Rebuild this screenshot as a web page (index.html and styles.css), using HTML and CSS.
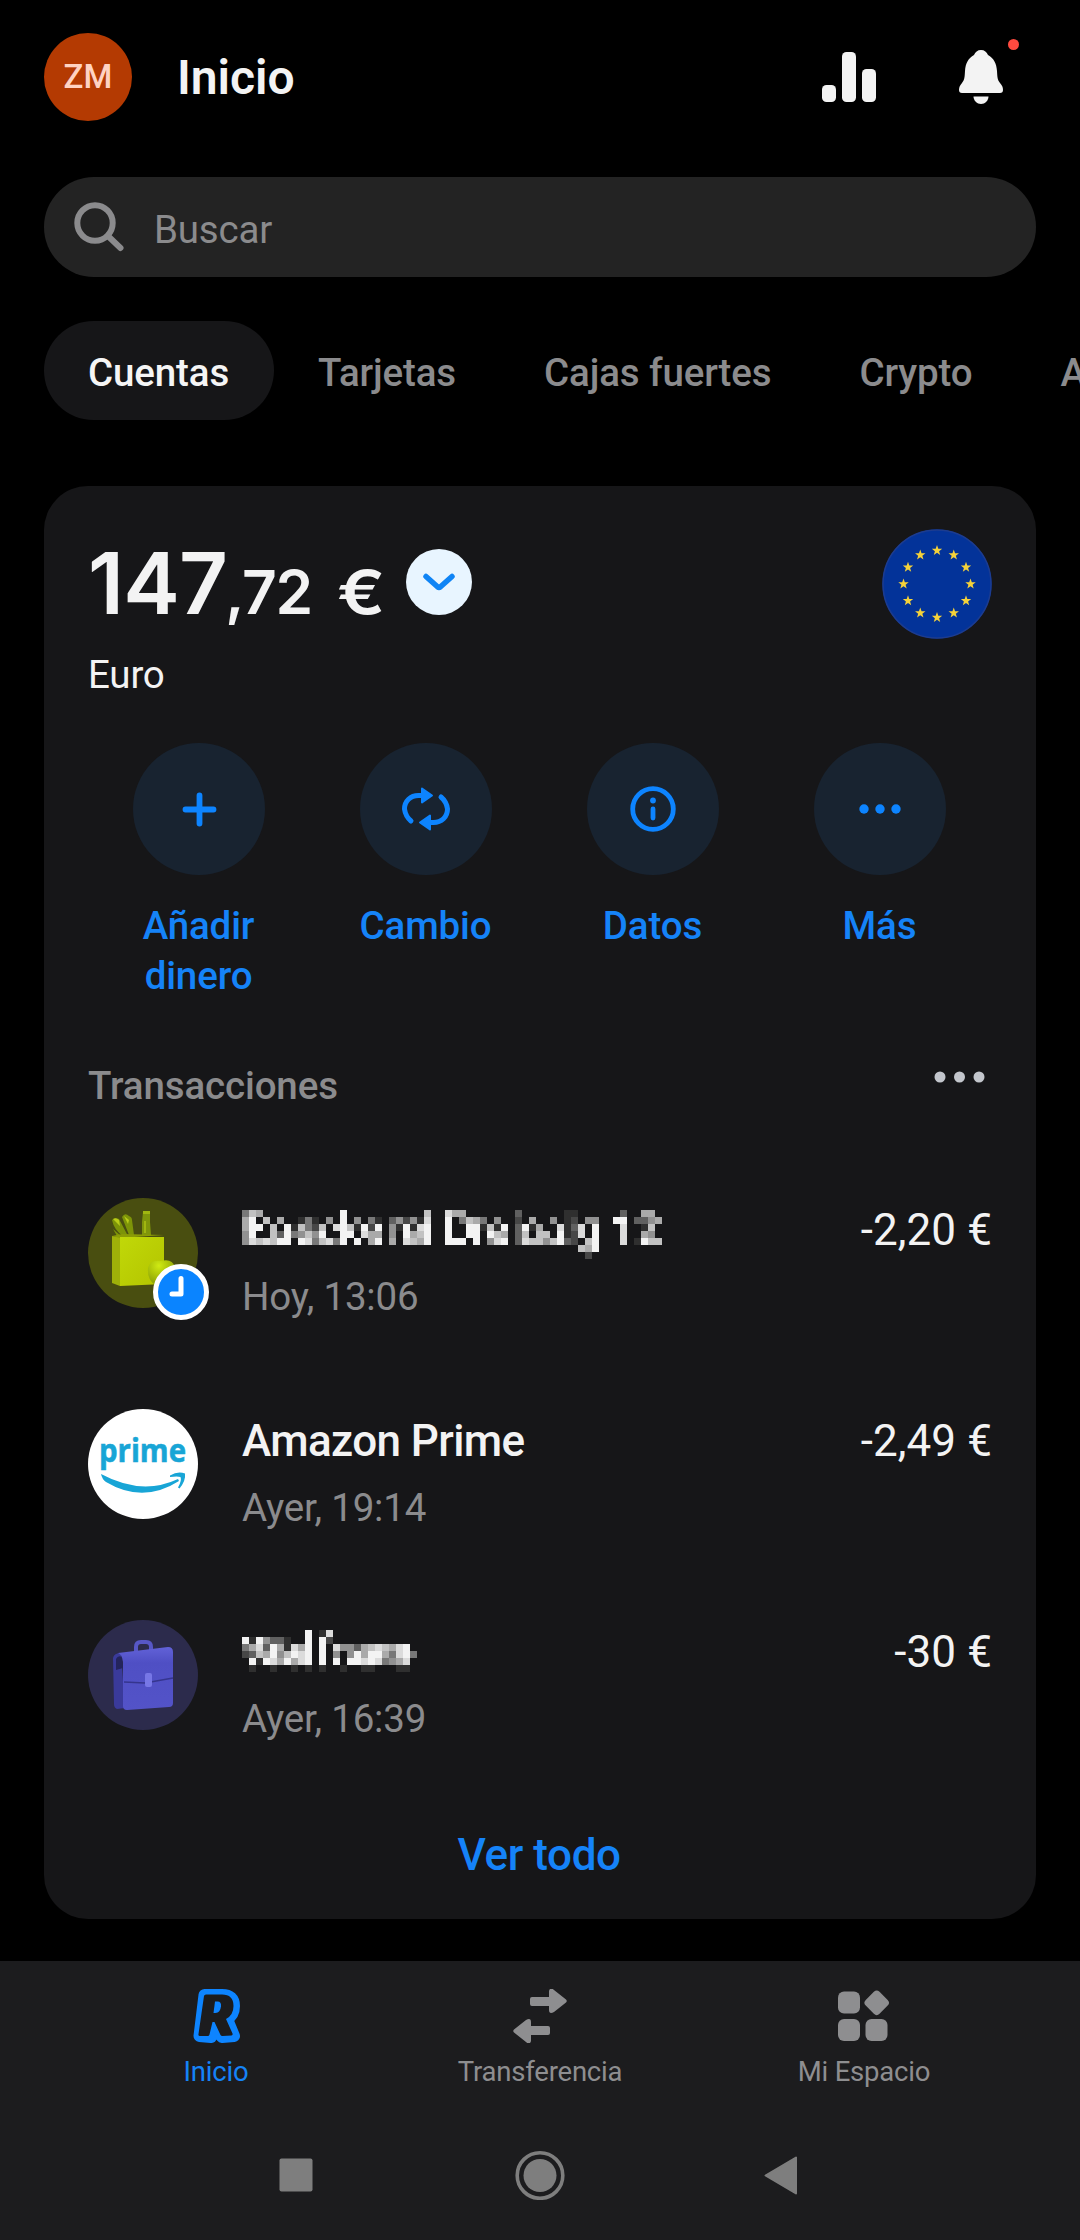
FILE: index.html
```html
<!DOCTYPE html>
<html lang="es">
<head>
<meta charset="utf-8">
<title>Inicio</title>
<link rel="stylesheet" href="styles.css">
</head>
<body>
<div class="app">
  <header class="header">
    <div class="avatar">ZM</div>
    <h1 class="title">Inicio</h1>
    <svg class="icon-stats" width="54" height="50" viewBox="0 0 54 50" fill="#f3f3f3"><rect y="33" width="14" height="17" rx="4.5"/><rect x="20" width="14" height="50" rx="4.5"/><rect x="40" y="17" width="14" height="33" rx="4.5"/></svg>
    <div class="bell">
      <svg width="46" height="55" viewBox="0 0 46 55" fill="#f3f3f3"><path d="M23 0c3.5 0 5.8 2 7 5 5.500 3 8.500 8 9 16 .3 6 .5 9 3 12 2 2.500 3 4 3 7 0 2-1 3-3 3H4c-2 0-3-1-3-3 0-3 1-4.500 3-7 2.500-3 2.700-6 3-12 .5-8 3.500-13 9-16 1.200-3 3.500-5 7-5z"/><path d="M15.500 46.500h15c0 4-3.500 7.500-7.500 7.500s-7.500-3.500-7.500-7.500z"/></svg>
      <span class="bell-dot"></span>
    </div>
  </header>

  <div class="search">
    <svg width="52" height="52" viewBox="0 0 52 52" fill="none" stroke="#8b8b8d" stroke-width="6"><circle cx="21" cy="22" r="17.700"/><path d="M34.500 35.500 46.500 47" stroke-linecap="round"/></svg>
    <span class="search-text">Buscar</span>
  </div>

  <nav class="tabs">
    <span class="tab tab-active">Cuentas</span>
    <span class="tab">Tarjetas</span>
    <span class="tab">Cajas fuertes</span>
    <span class="tab">Crypto</span>
    <span class="tab">Acciones</span>
  </nav>

  <main class="card">
    <section class="balance">
      <div>
        <div class="amount-row">
          <div class="amount">147<span class="cents">,72</span><span class="currency">€</span></div>
          <div class="expand"><svg width="32" height="18" viewBox="0 0 32 18" fill="none" stroke="#0f84f5" stroke-width="5.500" stroke-linecap="round" stroke-linejoin="round"><path d="M3 3.500 14.500 13.800q1.500 1.200 3 0L29 3.500"/></svg></div>
        </div>
        <div class="account-name">Euro</div>
      </div>
      <svg class="flag" width="110" height="110" viewBox="-55 -55 110 110">
        <defs><path id="star" fill="#f5d23a" d="M0-5.500 1.300-1.700H5.200L2.100.7 3.200 4.500 0 2.200-3.200 4.500-2.100.7-5.200-1.700H-1.300z"/></defs>
        <circle r="54.500" fill="#033399"/><circle r="54" fill="none" stroke="#1c3c90" stroke-width="1.500"/>
        <use href="#star" y="-33.500"/><use href="#star" x="16.750" y="-29"/><use href="#star" x="29" y="-16.750"/><use href="#star" x="33.500"/><use href="#star" x="29" y="16.750"/><use href="#star" x="16.750" y="29"/><use href="#star" y="33.500"/><use href="#star" x="-16.750" y="29"/><use href="#star" x="-29" y="16.750"/><use href="#star" x="-33.500"/><use href="#star" x="-29" y="-16.750"/><use href="#star" x="-16.750" y="-29"/>
      </svg>
    </section>

    <section class="actions">
      <div class="action">
        <div class="action-circle"><svg width="56" height="56" viewBox="-28 -28 56 56" stroke="#0d84ff" stroke-width="5.800" stroke-linecap="round"><path d="M-13.500 0.500h28M.5-13.500v28"/></svg></div>
        <span class="action-label">Añadir dinero</span>
      </div>
      <div class="action">
        <div class="action-circle"><svg width="56" height="56" viewBox="-28 -28 56 56"><g id="half"><path fill="none" stroke="#0d84ff" stroke-width="5" stroke-linecap="round" d="M-15 12A19 19 0 0 1-21.500 0c0-8 6-13.500 14-13.500h4"/><path fill="#0d84ff" stroke="#0d84ff" stroke-width="2" stroke-linejoin="round" d="M-4-20.500 6-13.500-4-6.500z"/></g><use href="#half" transform="rotate(180)"/></svg></div>
        <span class="action-label">Cambio</span>
      </div>
      <div class="action">
        <div class="action-circle"><svg width="56" height="56" viewBox="-28 -28 56 56" fill="none" stroke="#0d84ff" stroke-width="4.800" stroke-linecap="round"><circle r="20.300"/><path d="M0 0v9"/><circle cy="-8.500" r="2.900" fill="#0d84ff" stroke="none"/></svg></div>
        <span class="action-label">Datos</span>
      </div>
      <div class="action">
        <div class="action-circle"><svg width="56" height="56" viewBox="-28 -28 56 56" fill="#0d84ff"><circle cx="-16" r="4.700"/><circle r="4.700"/><circle cx="16" r="4.700"/></svg></div>
        <span class="action-label">Más</span>
      </div>
    </section>

    <section class="list-head">
      <h2 class="list-title">Transacciones</h2>
      <svg class="more" width="52" height="12" viewBox="0 0 52 12" fill="#c3c6cc"><circle cx="6" cy="6" r="5.500"/><circle cx="25.500" cy="6" r="5.500"/><circle cx="45" cy="6" r="5.500"/></svg>
    </section>

    <article class="row">
      <div class="row-icon">
        <svg width="110" height="110" viewBox="0 0 110 110">
          <defs><linearGradient id="bag" x2="1" y2="1"><stop stop-color="#c0d808"/><stop offset="1" stop-color="#b4c400"/></linearGradient><radialGradient id="apple" cx=".4" cy=".2" r=".8"><stop stop-color="#d0ea14"/><stop offset=".4" stop-color="#b0c80a"/><stop offset="1" stop-color="#7f9408"/></radialGradient></defs>
          <circle cx="55" cy="55" r="55" fill="#494e10"/>
          <path fill="#7d9408" d="M24 22q3-3 7-1l9 17h-5q-9-6-11-16zM34 19q3-5 7-1 3 1 3 4l2 15h-5zM25 31l8 7h-4z"/>
          <path fill="#b9cc18" d="M25 21q3-2 6 1l1 6zM36 18l5 4-1 4z"/>
          <path fill="#7f950b" d="M55 14h7v10l1 13h-9V24z"/><path fill="#a0b610" d="M55 13h7v3h-7zM56 23h2v12h-2z"/>
          <path fill="#9fb009" d="M24 38l8 1v49l-8-3z"/><path fill="#8b9c06" d="M24 38l10-2 42 1-44 3z"/>
          <path fill="url(#bag)" d="M32 39h44v47l-44 2z"/>
          <path fill="url(#apple)" d="M60 70q2-9 13-7 11-3 14 6 2 12-6 20-8 2-14-2-8-6-7-17z"/>
        </svg>
        <span class="pending"><svg width="46" height="46" viewBox="0 0 46 46" fill="none" stroke="#fff" stroke-width="5" stroke-linecap="round" stroke-linejoin="round"><path d="M23 9.500V25H14"/></svg></span>
      </div>
      <div class="row-body">
        <svg class="mosaic" data-mosaic="first" width="420" height="49" role="img" aria-label="Nombre oculto"></svg>
        <span class="row-date">Hoy, 13:06</span>
      </div>
      <span class="row-amount">-2,20 €</span>
    </article>

    <article class="row">
      <div class="row-icon">
        <svg width="110" height="110" viewBox="0 0 110 110">
          <circle cx="55" cy="55" r="55" fill="#fff"/>
          <text class="prime-word" x="11" y="53" textLength="87" lengthAdjust="spacingAndGlyphs">prime</text>
          <path fill="#18a5d6" d="M13 65q41 22 77 5l1 2q-36 23-73 1-4-3-5-8zM82 66.500q8-5 15-2 1 7-5.500 15l-1.500-1q4-7 2.500-10.500-3-1-10.500 0z"/>
        </svg>
      </div>
      <div class="row-body">
        <span class="row-name">Amazon Prime</span>
        <span class="row-date">Ayer, 19:14</span>
      </div>
      <span class="row-amount">-2,49 €</span>
    </article>

    <article class="row">
      <div class="row-icon">
        <svg width="110" height="110" viewBox="0 0 110 110">
          <defs><linearGradient id="flap" x2="0" y2="1"><stop stop-color="#6262d8"/><stop offset=".25" stop-color="#4f4fc4"/><stop offset="1" stop-color="#5353c8"/></linearGradient></defs>
          <circle cx="55" cy="55" r="55" fill="#2c2b4c"/>
          <path fill="none" stroke="#5757c6" stroke-width="4" d="M48 33v-6q0-5 5-5h5q5 0 5 5v5"/>
          <path fill="#3a3a9a" d="M25 38q1-5 8-5l4 55-8 1q-3-1-3-5z"/>
          <path fill="#24245c" d="M28 39q2-4 6-2l1 11-7 2z"/>
          <path fill="url(#flap)" d="M30 33l50-6q5 0 5 5v51q0 4-4 4l-42 3q-4 0-4-4V42q-1-8-5-9z"/>
          <path fill="none" stroke="#35358e" stroke-width="1.500" d="M36 62l21 1 28-5"/>
          <rect x="57" y="53" width="7" height="14" rx="2" fill="#7777e6"/>
        </svg>
      </div>
      <div class="row-body">
        <svg class="mosaic mosaic-high" data-mosaic="third" width="420" height="49" role="img" aria-label="Nombre oculto"></svg>
        <span class="row-date">Ayer, 16:39</span>
      </div>
      <span class="row-amount">-30 €</span>
    </article>

    <div class="see-all">Ver todo</div>
  </main>

  <footer class="bottom">
    <nav class="nav">
      <div class="nav-item nav-active">
        <svg width="54" height="54" viewBox="5 9 54 54"><path fill="#0d84ff" stroke="#0d84ff" stroke-width="12" stroke-linejoin="round" d="M20.500 15H38q12 0 12 11 0 9-7 13l7 17-12 1-8-11-3 11-11.500-1z"/><path fill="#1c1c1e" d="M20 16q.2-1.500 2-1.500h16q11.500 0 11.500 11.500 0 9-7.500 13l6.500 14.500q.5 1.500-1 2l-9 .5q-1.500 0-2-1l-6-13h-2l-3 12.500q-.3 1.500-2 1.500h-7.500q-2 0-1.500-2z"/><path fill="#0d84ff" d="M31 21.500h2.500q4 0 3.500 5-.7 6-5.500 6.500h-2z"/></svg>
        <span>Inicio</span>
      </div>
      <div class="nav-item">
        <svg width="54" height="54" viewBox="0 0 54 54" fill="#8e8e90"><g id="arrow"><path d="M19 8h17V2.500Q36-.500 39-.5 40 0 41 1L53 10.500q1.500 1.500 0 3L41 23q-5 2.500-5-2v-4H19q-2 0-2-2v-5q0-2 2-2z"/></g><use href="#arrow" transform="rotate(180 27 27)"/></svg>
        <span>Transferencia</span>
      </div>
      <div class="nav-item">
        <svg width="54" height="54" viewBox="0 0 54 54" fill="#8e8e90"><rect x="1" y="2.500" width="22" height="22" rx="6"/><rect x="1" y="30" width="22" height="22" rx="6"/><rect x="28.500" y="30" width="22" height="22" rx="6"/><rect x="30" y="4" width="19.500" height="19.500" rx="4" transform="rotate(45 39.700 13.700)"/></svg>
        <span>Mi Espacio</span>
      </div>
    </nav>
    <div class="system">
      <svg width="50" height="50" viewBox="0 0 50 50" fill="#7e7e7e"><rect x="8.500" y="8.500" width="33" height="33" rx="2"/></svg>
      <svg width="50" height="50" viewBox="0 0 50 50" fill="#7e7e7e"><circle cx="25" cy="25.500" r="16.500"/><circle cx="25" cy="25.500" r="22.800" fill="none" stroke="#7e7e7e" stroke-width="3.600"/></svg>
      <svg width="50" height="50" viewBox="0 0 50 50" fill="#7e7e7e" stroke="#7e7e7e" stroke-width="2" stroke-linejoin="round"><path d="M6.500 25.500 37 7.500v36z"/></svg>
    </div>
  </footer>
</div>
<script src="mosaic.js"></script>
</body>
</html>
```
FILE: styles.css
```css
* { box-sizing: border-box; margin: 0; padding: 0; }
body { width: 1080px; height: 2240px; background: #000; overflow: hidden; font-family: Roboto, "Liberation Sans", sans-serif; color: #f3f3f3; }
svg { display: block; flex: none; }
.app { display: flex; flex-direction: column; height: 2240px; }

.header { display: flex; align-items: center; height: 88px; margin: 33px 44px 0; }
.avatar { width: 88px; height: 88px; border-radius: 50%; background: #b43a02; color: #ffd3c2; font-size: 33px; font-weight: 500; line-height: 87px; text-align: center; }
.title { margin-left: 45px; padding-top: 2px; font-size: 48px; font-weight: 600; line-height: 86px; flex: 1; }
.icon-stats { margin-right: 82px; }
.bell { position: relative; margin-right: 32px; }
.bell-dot { position: absolute; left: 50px; top: -11px; width: 11px; height: 11px; border-radius: 50%; background: #ff4a3f; }

.search { display: flex; align-items: center; gap: 28px; height: 100px; margin: 56px 44px 0; padding-left: 30px; border-radius: 50px; background: #232323; color: #8b8b8d; }
.search-text { font-size: 38.500px; letter-spacing: -0.2px; padding-top: 5px; }

.tabs { display: flex; height: 99px; margin: 44px 0 0 44px; overflow: hidden; }
.tab { flex: none; padding: 4px 44px 0; line-height: 95px; font-size: 38.500px; font-weight: 500; letter-spacing: -0.13px; color: #8b8b8d; white-space: nowrap; }
.tab-active { padding-right: 45px; border-radius: 50px; background: #161618; color: #f5f5f5; }

.card { display: flex; flex-direction: column; height: 1433px; margin: 66px 44px 0; padding: 43px 44px 0; border-radius: 44px; background: #161618; }
.balance { display: flex; justify-content: space-between; height: 214px; }
.amount-row { display: flex; align-items: center; height: 110px; }
.amount { width: 298px; font-family: Inter, Roboto, sans-serif; font-size: 85px; font-weight: 600; line-height: 110px; padding-top: 8px; letter-spacing: -0.8px; white-space: nowrap; }
.cents, .currency { font-size: 60.500px; letter-spacing: -1.2px; }
.cents { margin-left: -2px; }
.currency { display: inline-block; margin-left: 25px; line-height: 60px; transform: scaleX(1.18); transform-origin: left; }
.expand { display: flex; align-items: center; justify-content: center; width: 66px; height: 66px; margin: -4px 0 0 20px; border-radius: 50%; background: #e8f5ff; }
.account-name { margin-top: 11px; font-size: 38.500px; line-height: 50px; letter-spacing: -0.2px; }

.actions { display: flex; justify-content: center; height: 312px; margin-right: 2px; }
.action { display: flex; flex: none; flex-direction: column; align-items: center; width: 227px; }
.action-circle { display: flex; align-items: center; justify-content: center; width: 132px; height: 132px; border-radius: 50%; background: #182330; }
.action-label { display: flex; justify-content: center; width: 132px; margin-top: 26px; color: #1583f8; font-size: 38.500px; font-weight: 500; line-height: 50px; letter-spacing: -0.13px; text-align: center; }

.list-head { display: flex; justify-content: space-between; height: 143px; }
.list-title { padding-top: 1px; color: #8b8b8d; font-size: 38.500px; font-weight: 500; line-height: 60px; letter-spacing: -0.13px; }
.more { margin: 16px 6px 0 0; }

.row { display: flex; height: 211px; }
.row-icon { position: relative; width: 110px; height: 110px; margin-right: 44px; }
.pending { position: absolute; left: 65px; top: 66px; width: 56px; height: 56px; border: 5px solid #fff; border-radius: 50%; background: #0a84ff; }
.row-body { display: flex; flex-direction: column; flex: 1; }
.row-name { font-size: 44px; font-weight: 500; line-height: 64px; height: 73px; letter-spacing: -0.6px; }
.mosaic { margin-top: 12px; margin-bottom: 12px; }
.mosaic-high { margin-top: 10px; margin-bottom: 14px; }
.row-date { color: #8b8b8d; font-size: 38.500px; line-height: 52px; letter-spacing: -0.2px; }
.row-amount { font-size: 44px; line-height: 64px; letter-spacing: 0.1px; }
.prime-word { font: 700 33px "Open Sans", sans-serif; fill: #18a5d6; stroke: #18a5d6; stroke-width: 0.6px; }
.see-all { color: #1583f8; font-size: 44px; font-weight: 500; line-height: 60px; letter-spacing: -0.4px; text-align: center; margin: -6px 2px 0 0; }

.bottom { height: 279px; margin-top: 42px; background: #1c1c1e; }
.nav { display: flex; height: 170px; padding: 28px 54px 0; }
.nav-item { display: flex; flex-direction: column; align-items: center; flex: 1; gap: 12px; color: #8e8e90; font-size: 27.500px; line-height: 34px; letter-spacing: -0.2px; }
.nav-active { color: #1583f8; }
.system { display: flex; justify-content: space-between; padding: 19px 271px 0; }
```
FILE: mosaic.js
```js
// Brightness levels (0-9) of the 7px blocks that hide the merchant names.
const mosaics = {
  first: [
    "476000000000009000000000007008660000000300000011000000300660",
    "690706001410509050410352518009047640500206005012055009903356",
    "699070917427089719290519189009009917190391600813809000800170",
    "590073945759009908660509679009009909760370770912809000800650",
    "587879909847849090690608769009990905890387757932079000801977",
    "000000000000000000000000000000000000000000000000769000000000",
    "000000000000000000000000000000000000000000000000020000000000"
  ],
  third: [
    "0000000009018000000000000",
    "9195331009092000000000000",
    "4683961869090855367876890",
    "2376957989090505969964894",
    "0919869689090909989845680",
    "0100100101010010011000110"
  ]
};
for (const svg of document.querySelectorAll("[data-mosaic]")) {
  mosaics[svg.dataset.mosaic].forEach((line, y) => {
    [...line].forEach((level, x) => {
      if (level === "0") return;
      const rect = document.createElementNS("http://www.w3.org/2000/svg", "rect");
      const v = 22 + Math.round(level * 24.6);
      rect.setAttribute("x", x * 7);
      rect.setAttribute("y", y * 7);
      rect.setAttribute("width", 7);
      rect.setAttribute("height", 7);
      rect.setAttribute("fill", `rgb(${v},${v},${v})`);
      svg.appendChild(rect);
    });
  });
}
```
